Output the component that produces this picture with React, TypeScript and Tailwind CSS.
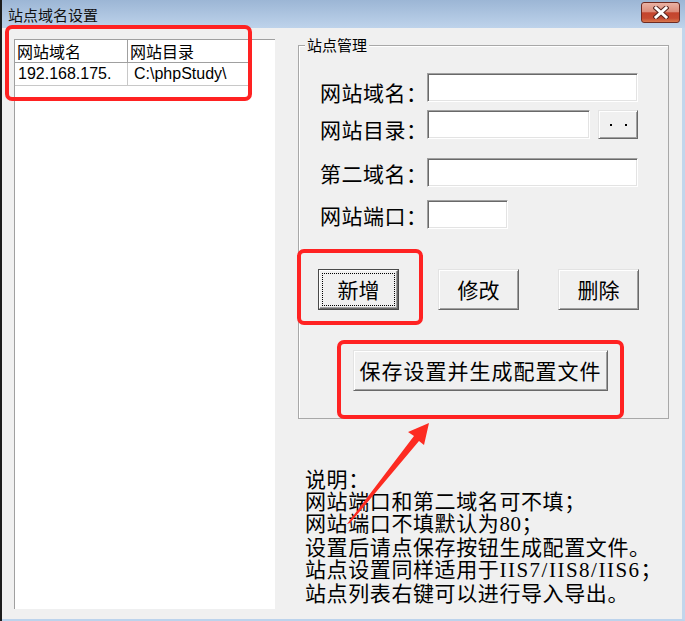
import React from "react";

const cjk = "font-['Noto_Sans_CJK_SC',sans-serif]";

// Win classic sunken edit box
function Edit({ className }: { className: string }) {
  return (
    <div
      className={`${className} h-[29px] bg-white border border-t-[#a0a0a0] border-l-[#a0a0a0] border-r-white border-b-white shadow-[inset_1px_1px_0_#696969,inset_-1px_-1px_0_#e3e3e3]`}
    />
  );
}

// raised 3D push button
function Btn({
  className,
  children,
}: {
  className: string;
  children: React.ReactNode;
}) {
  return (
    <div
      className={`${className} flex items-center justify-center bg-[#f0f0f0] border border-t-[#e3e3e3] border-l-[#e3e3e3] border-r-[#696969] border-b-[#696969] shadow-[inset_1px_1px_0_#ffffff,inset_-1px_-1px_0_#a0a0a0] text-[21px] text-black`}
    >
      {children}
    </div>
  );
}

function FormRow({
  label,
  lower,
  children,
}: {
  label: string;
  lower?: boolean;
  children: React.ReactNode;
}) {
  return (
    <div className="flex items-center h-[29px]">
      <div
        className={`w-[109px] pl-[2px] text-[21px] leading-[22px] tracking-[0.5px] text-black whitespace-nowrap ${
          lower ? "pt-[8px]" : ""
        }`}
      >
        {label}
      </div>
      {children}
    </div>
  );
}

export default function App() {
  return (
    <div
      className={`relative w-[685px] h-[621px] flex bg-[#f0f0f0] overflow-hidden ${cjk}`}
    >
      <div className="w-[2px] h-full bg-[#1c1c1c]" />

      <div className="flex-1 flex flex-col">
        {/* title bar */}
        <div className="h-[28px] flex items-center justify-between pl-[6px] pr-[5px] bg-linear-to-b from-[#9cb6d5] to-[#bed3eb]">
          <span className="text-[15px] text-[#111] leading-none">站点域名设置</span>
          <div className="w-[39px] h-[21px] -mt-[3px] rounded-[3px] border border-[#6e2b22] bg-[linear-gradient(#eab2a4_0%,#dc8d7b_45%,#c4442d_52%,#c64a31_80%,#d9794f_100%)] flex items-center justify-center">
            <svg width="16" height="13" viewBox="0 0 16 13">
              <path d="M3 2 L13 11 M13 2 L3 11" stroke="#5a2620" strokeWidth="5" strokeLinecap="square" />
              <path d="M3 2 L13 11 M13 2 L3 11" stroke="#ffffff" strokeWidth="3" strokeLinecap="square" />
            </svg>
          </div>
        </div>

        {/* body */}
        <div className="flex-1 flex border-r-[3px] border-r-[#c2d6ec] border-b-2 border-b-[#bcd3ec]">
          {/* site list */}
          <div className="pl-[12px] pt-[11px]">
            <div className="w-[261px] h-[570px] bg-white border-l border-t border-[#a0a0a0]">
              <div className="flex h-[23px] border-b border-[#a0a0a0] w-[234px] text-[16px] text-black">
                <div className="w-[113px] border-r border-[#a0a0a0] pl-[2px] flex items-center">
                  网站域名
                </div>
                <div className="w-[121px] border-r border-[#a0a0a0] pl-[2px] flex items-center">
                  网站目录
                </div>
              </div>
              <div className="flex h-[23px] border-b border-[#c8c8c8] w-[234px] text-[16px] text-black font-['Liberation_Sans',sans-serif]">
                <div className="w-[113px] border-r border-[#c8c8c8] pl-[3px] flex items-center">
                  192.168.175.
                </div>
                <div className="w-[121px] pl-[6px] flex items-center">
                  C:\phpStudy\
                </div>
              </div>
            </div>
          </div>

          {/* settings column */}
          <div className="flex-1 flex flex-col">
            <div className="relative ml-[23px] mt-[17px] w-[371px] h-[374px] border border-[#a8a8a8] shadow-[inset_1px_1px_0_#ffffff]">
              <span className="absolute -top-[10px] left-[6px] px-[2px] bg-[#f0f0f0] text-[15px] leading-[18px] text-black">
                站点管理
              </span>

              <div className="flex flex-col pl-[19px] pt-[27px]">
                <FormRow label="网站域名：" lower>
                  <Edit className="w-[211px]" />
                </FormRow>
                <div className="mt-[8px]">
                  <FormRow label="网站目录：" lower>
                    <Edit className="w-[163px]" />
                    <Btn className="ml-[8px] w-[40px] h-[29px]">
                      <div className="flex gap-[13px]">
                        <span className="w-[2px] h-[2px] bg-black" />
                        <span className="w-[2px] h-[2px] bg-black" />
                      </div>
                    </Btn>
                  </FormRow>
                </div>
                <div className="mt-[19px]">
                  <FormRow label="第二域名：">
                    <Edit className="w-[211px]" />
                  </FormRow>
                </div>
                <div className="mt-[13px]">
                  <FormRow label="网站端口：">
                    <Edit className="w-[81px]" />
                  </FormRow>
                </div>

                <div className="mt-[40px] flex gap-[39px]">
                  {/* default button with focus rect */}
                  <div className="w-[81px] h-[41px] border border-[#4a4a4a]">
                    <div className="w-full h-full flex items-center justify-center bg-[#f0f0f0] border border-t-[#ffffff] border-l-[#ffffff] border-r-[#696969] border-b-[#696969] shadow-[inset_-1px_-1px_0_#a0a0a0]">
                      <div className="w-[73px] h-[33px] border border-dotted border-black flex items-center justify-center text-[21px] text-black">
                        新增
                      </div>
                    </div>
                  </div>
                  <Btn className="w-[81px] h-[41px]">修改</Btn>
                  <Btn className="w-[81px] h-[41px]">删除</Btn>
                </div>

                <div className="mt-[40px] pl-[35px]">
                  <Btn className="w-[255px] h-[41px] tracking-[1px]">保存设置并生成配置文件</Btn>
                </div>
              </div>
            </div>

            <div className="ml-[30px] mt-[48px] text-[21px] leading-[22px] tracking-[0.6px] text-black whitespace-nowrap">
              <div>说明：</div>
              <div>网站端口和第二域名可不填；</div>
              <div>
                网站端口不填默认为<span className="font-['Liberation_Serif',serif]">80</span>；
              </div>
              <div>设置后请点保存按钮生成配置文件。</div>
              <div>
                站点设置同样适用于
                <span className="font-['Liberation_Serif',serif] tracking-[1.5px]">IIS7/IIS8/IIS6</span>；
              </div>
              <div>站点列表右键可以进行导入导出。</div>
            </div>
          </div>
        </div>
      </div>

      {/* red callouts */}
      <div className="absolute left-[5px] top-[25px] w-[247px] h-[76px] rounded-[7px] border-4 border-[#ff2222]" />
      <div className="absolute left-[297px] top-[249px] w-[126px] h-[76px] rounded-[7px] border-4 border-[#ff2222]" />
      <div className="absolute left-[337px] top-[340px] w-[287px] h-[79px] rounded-[7px] border-4 border-[#ff2222]" />
      <svg
        className="absolute left-[340px] top-[418px] pointer-events-none"
        width="95"
        height="110"
        viewBox="0 0 95 110"
      >
        <polygon points="89,5 68,14 74,18 7,106 10,105 79,23 84,27" fill="#fd2b21" />
      </svg>
    </div>
  );
}
